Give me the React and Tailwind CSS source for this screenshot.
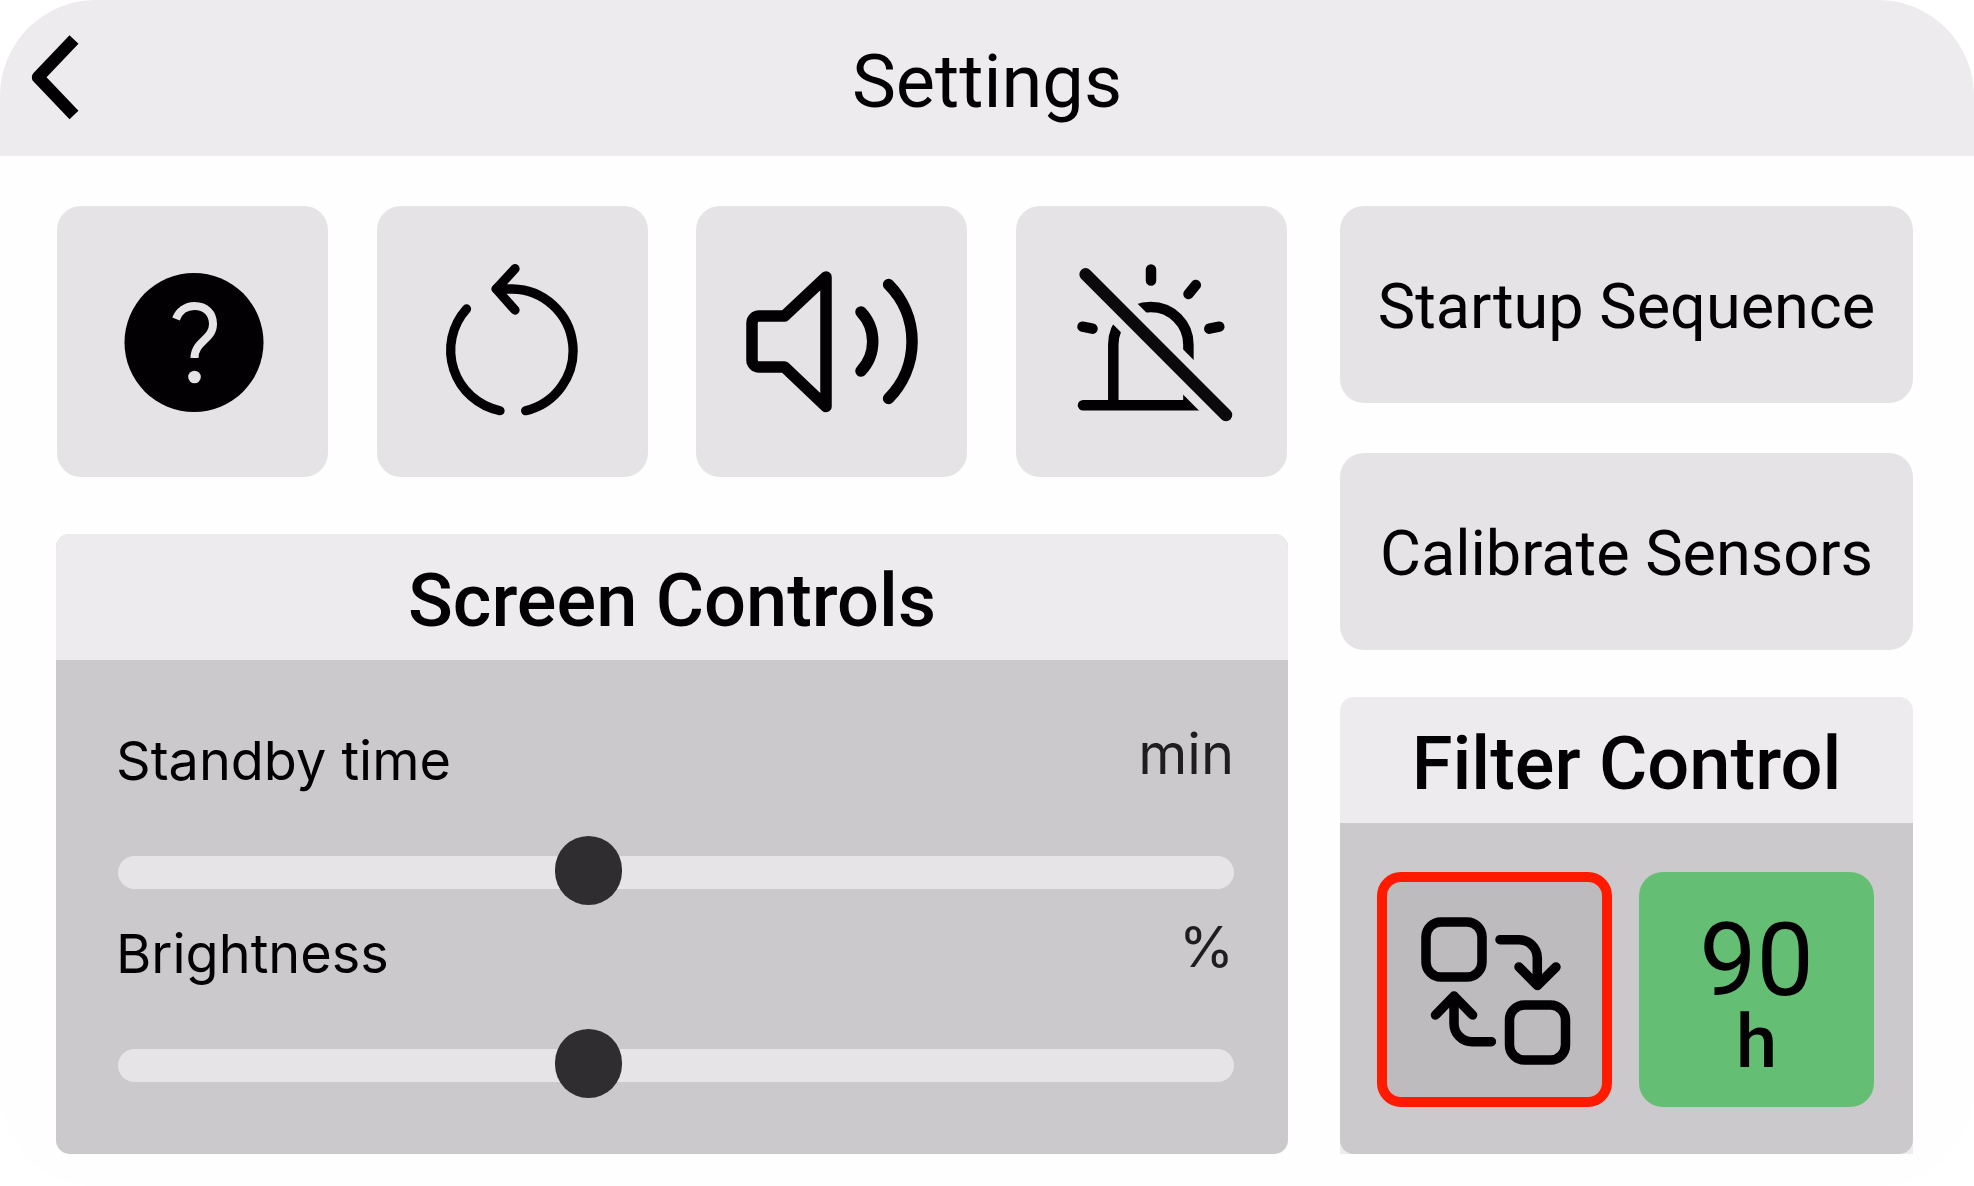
import React, { useState } from "react";

const BackIcon = () => (
  <svg viewBox="0 0 100 156" className="w-[100px] h-[156px]" fill="none" stroke="#020003" strokeWidth="12.4" strokeLinejoin="round">
    <path d="M74 39.5L38 77.3L74 115" />
  </svg>
);

const HelpIcon = () => (
  <svg viewBox="0 0 271 271" className="w-[271px] h-[271px]" fill="none">
    <circle cx="137" cy="136.5" r="69.5" fill="#020003" />
    <path d="M119 113C122 105 129 100 137.5 100C149 100 156 107.5 156 118C156 134 137.5 135 137.5 152" stroke="#E5E3E6" strokeWidth="8" />
    <circle cx="137.5" cy="171" r="6.3" fill="#E5E3E6" />
  </svg>
);

const ResetIcon = () => (
  <svg viewBox="0 0 271 271" className="w-[271px] h-[271px]" fill="none" stroke="#020003" strokeWidth="9.3" strokeLinecap="round" strokeLinejoin="round">
    <path d="M89.5 103A61.7 61.7 0 0 0 123 204.7" />
    <path d="M148.7 204.7A61.7 61.7 0 0 0 135.6 83H119.3" />
    <path d="M138 62.7L119.3 83L138 104" />
  </svg>
);

const VolumeIcon = () => (
  <svg viewBox="0 0 271 271" className="w-[271px] h-[271px]" fill="none" stroke="#020003" strokeWidth="11.5" strokeLinecap="round" strokeLinejoin="round">
    <path d="M56 117A7 7 0 0 1 63 110H88.5L130 71V200.5L88.5 161H63A7 7 0 0 1 56 154Z" />
    <path d="M165 106A43 43 0 0 1 165 165" />
    <path d="M192.6 78.5A81 81 0 0 1 192.6 192.5" />
  </svg>
);

const AlarmOffIcon = () => (
  <svg viewBox="0 0 271 271" className="w-[271px] h-[271px]" fill="none" stroke="#020003" strokeWidth="10.5">
    <path d="M97.3 199V138.5A37.5 37.5 0 0 1 172.4 138.5V199" />
    <path d="M67 199.3H190" strokeLinecap="round" />
    {/* gap around the slash */}
    <path d="M69.6 68.3L210 209" stroke="#E5E3E6" strokeWidth="32" />
    <path d="M69.6 68.3L210 209" stroke="#0B090C" strokeWidth="12.5" strokeLinecap="round" />
    <path d="M135 63.5V74.5M179.8 79L172.5 88M66.5 120.7L76.5 122.7M193.3 122.7L203.3 120.7" strokeLinecap="round" />
  </svg>
);

const SwapIcon = () => (
  <svg viewBox="10 10 215 215" className="w-[215px] h-[215px]" fill="none" stroke="#020003" strokeWidth="9.5" strokeLinecap="round" strokeLinejoin="round">
    <rect x="49" y="50" width="56" height="55" rx="15" />
    <rect x="132.5" y="133" width="56" height="55" rx="15" />
    <path d="M123 67.7H142A18.3 18.3 0 0 1 160.3 86V113" />
    <path d="M142 95L160.3 113.5L179 95" />
    <path d="M114.4 169.7H95A18 18 0 0 1 77 151.7V125" />
    <path d="M58.5 143L77 124L95.6 143" />
  </svg>
);

const tiles = [
  { label: "Help", icon: <HelpIcon /> },
  { label: "Reset", icon: <ResetIcon /> },
  { label: "Volume", icon: <VolumeIcon /> },
  { label: "Mute alarm", icon: <AlarmOffIcon /> },
];

const SliderRow = ({ id, label, unit, max, value, onChange }) => (
  <div className="mb-[15px]">
    <div className="flex items-start justify-between font-['Inter',sans-serif]">
      <label htmlFor={id} className="text-[54px] leading-[64px] text-[#020003]">
        {label}
      </label>
      <span className="text-[56px] leading-[50px] text-[#1F1D20]">{unit}</span>
    </div>
    <div className="mt-[45px] pl-0.5">
      <input
        id={id}
        type="range"
        min="0"
        max={max}
        value={value}
        onChange={(e) => onChange(Number(e.target.value))}
        className="block w-full h-[69px] appearance-none bg-transparent [&::-webkit-slider-runnable-track]:h-[33px] [&::-webkit-slider-runnable-track]:rounded-full [&::-webkit-slider-runnable-track]:bg-[#E6E4E7] [&::-webkit-slider-thumb]:appearance-none [&::-webkit-slider-thumb]:-mt-5 [&::-webkit-slider-thumb]:w-[67px] [&::-webkit-slider-thumb]:h-[69px] [&::-webkit-slider-thumb]:rounded-full [&::-webkit-slider-thumb]:bg-[#2F2D30]"
      />
    </div>
  </div>
);

const App = () => {
  const [standby, setStandby] = useState(25);
  const [brightness, setBrightness] = useState(50);

  return (
    <div className="min-h-screen bg-white font-['Roboto',sans-serif] text-[#020003]">
      <div className="min-h-screen flex flex-col rounded-[96px] overflow-hidden bg-[#FEFEFE]">
        {/* Header */}
        <header className="grid grid-cols-[1fr_auto_1fr] items-center h-[156px] bg-[#EDEBEE]">
          <button aria-label="Back" className="w-[100px]">
            <BackIcon />
          </button>
          <h1 className="pt-2 text-[74px] leading-[84px]">Settings</h1>
        </header>

        <main className="flex-1 grid grid-cols-[1232fr_573fr] gap-[52px] pl-14 pr-[61px] pt-[50px] pb-8">
          {/* Left column */}
          <div className="flex flex-col">
            <div className="flex justify-between px-px mb-[57px]">
              {tiles.map((tile) => (
                <button
                  key={tile.label}
                  aria-label={tile.label}
                  className="flex items-center justify-center w-[271px] h-[271px] rounded-3xl bg-[#E5E3E6]"
                >
                  {tile.icon}
                </button>
              ))}
            </div>

            <section className="flex-1 flex flex-col rounded-[14px] overflow-hidden bg-[#CBC9CC]">
              <h2 className="flex items-center justify-center h-[126px] pt-2 bg-[#EDEBEE] text-[74px] leading-[84px] font-medium">
                Screen Controls
              </h2>
              <div className="pt-[69px] pl-[60px] pr-[54px]">
                <SliderRow id="standby" label="Standby time" unit="min" max={60} value={standby} onChange={setStandby} />
                <SliderRow id="brightness" label="Brightness" unit="%" max={120} value={brightness} onChange={setBrightness} />
              </div>
            </section>
          </div>

          {/* Right column */}
          <div className="flex flex-col">
            <button className="h-[197px] mb-[50px] pt-1 rounded-3xl bg-[#E5E3E6] text-[63px] leading-[72px]">
              Startup Sequence
            </button>
            <button className="h-[197px] mb-[47px] pt-1 rounded-3xl bg-[#E5E3E6] text-[63px] leading-[72px]">
              Calibrate Sensors
            </button>

            <section className="flex-1 flex flex-col rounded-t-[14px] bg-[#EDEBEE]">
              <h2 className="flex items-center justify-center h-[126px] pt-2 text-[74px] leading-[84px] font-medium">
                Filter Control
              </h2>
              <div className="flex-1 grid grid-cols-2 gap-[27px] pl-[37px] pr-[39px] pt-[49px] rounded-b-[14px] bg-[#CBC9CC]">
                <button
                  aria-label="Replace filter"
                  className="flex items-center justify-center h-[235px] rounded-3xl border-[10px] border-[#FF1A00] bg-[#BDBBBE]"
                >
                  <SwapIcon />
                </button>
                <div className="flex flex-col items-center justify-center h-[235px] pt-6 rounded-3xl bg-[#64BF75]">
                  <span className="text-[102px] leading-[80px]">90</span>
                  <span className="text-[74px] leading-[84px] font-medium">h</span>
                </div>
              </div>
            </section>
          </div>
        </main>
      </div>
    </div>
  );
};

export default App;
